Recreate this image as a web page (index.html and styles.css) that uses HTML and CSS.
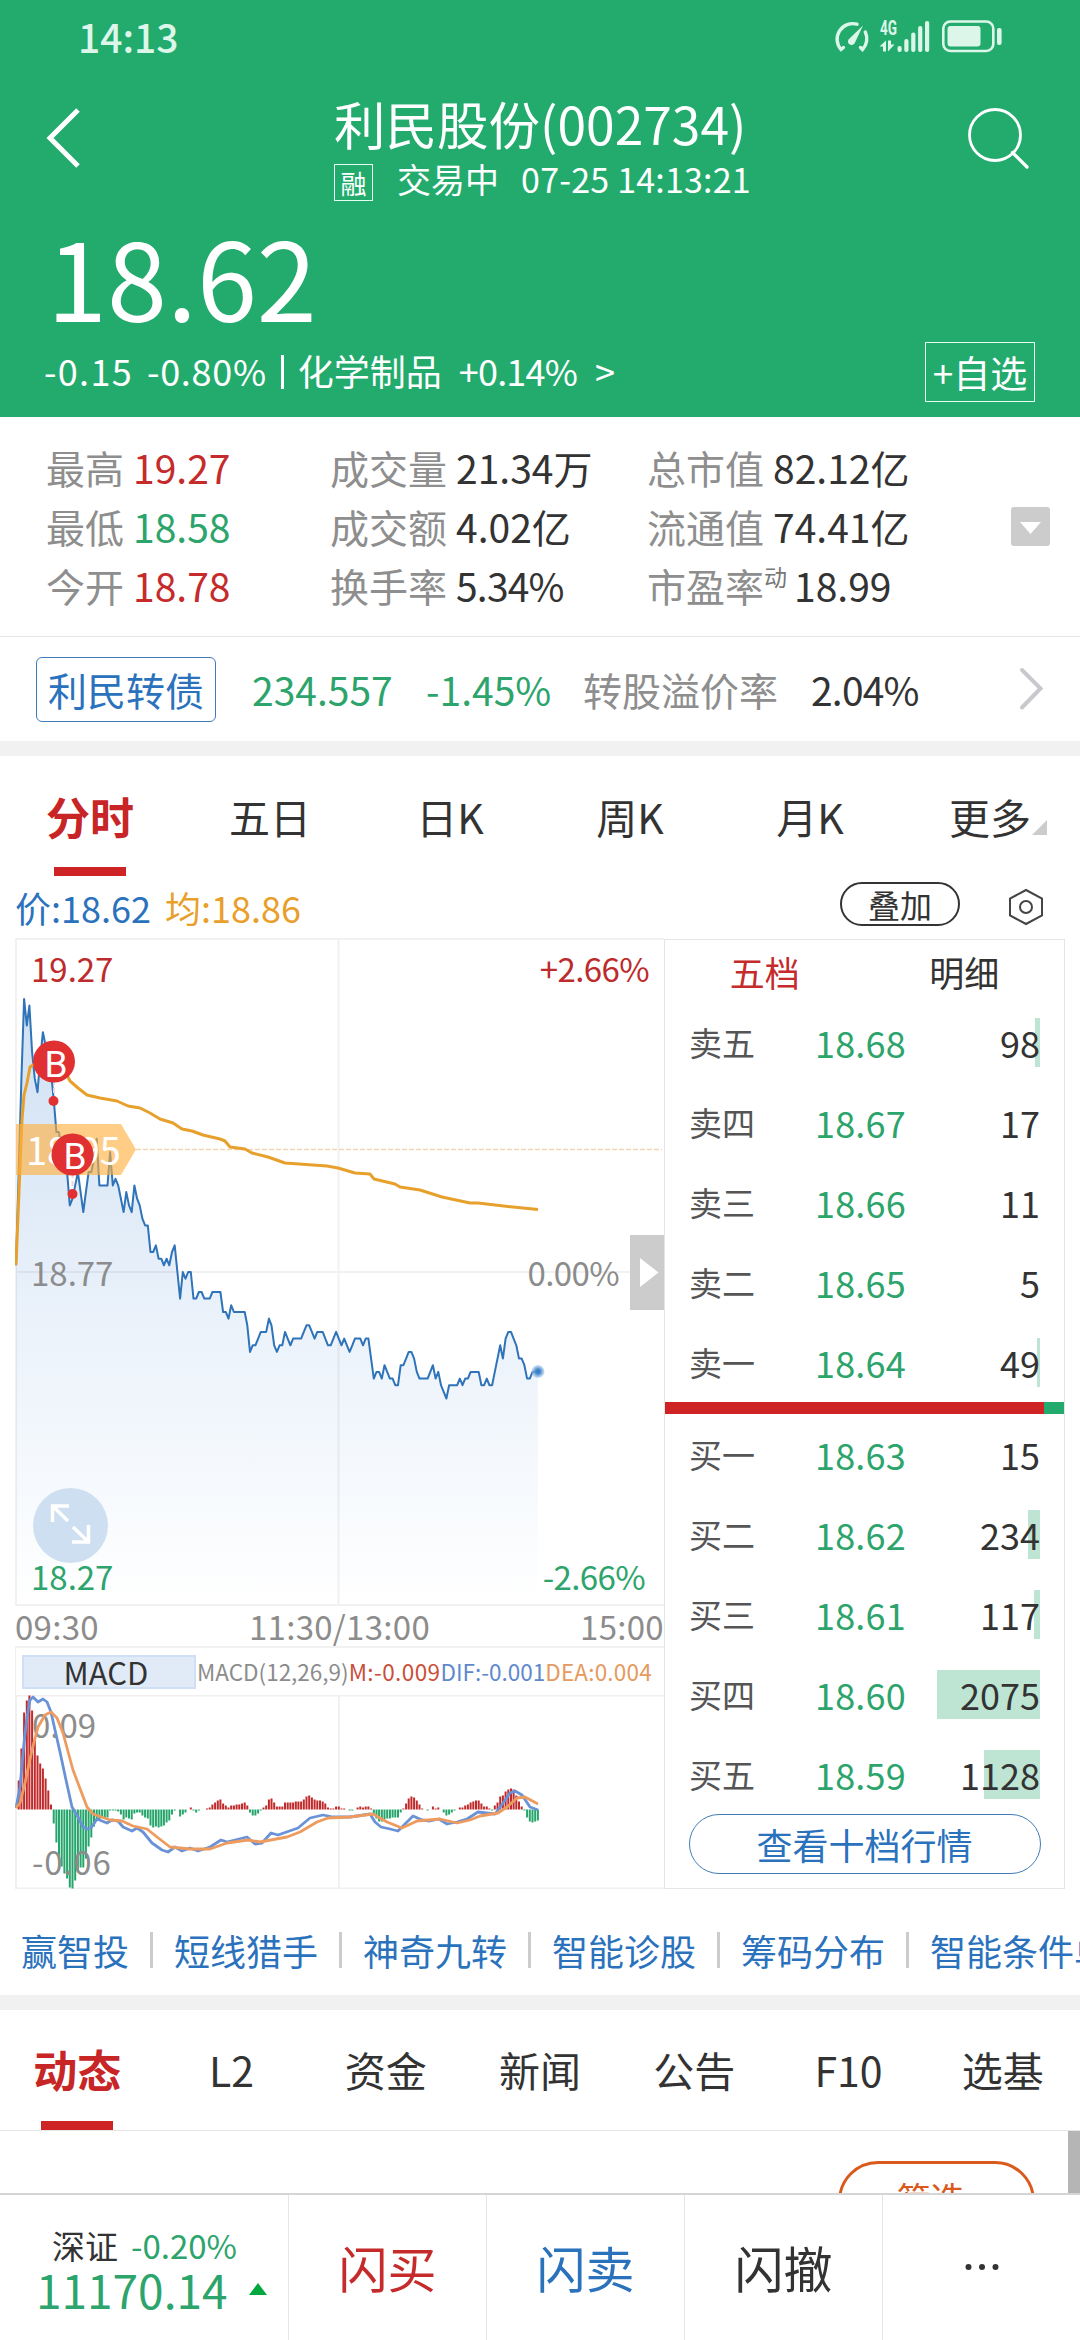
FILE: index.html
```html
<!DOCTYPE html>
<html lang="zh-CN">
<head>
  <meta charset="UTF-8" />
  <meta name="viewport" content="width=device-width, initial-scale=1.0"/>
  <title>利民股份(002734)</title>
  <link rel="stylesheet" href="styles.css">
</head>
<body>

  <header class="header">
    <div class="status-bar">
      <span class="clock">14:13</span>
      <svg class="status-icons" width="172" height="40" viewBox="832 18 172 40">
        <g fill="none" stroke="#dcf7e9" stroke-width="3.4" stroke-linecap="round">
          <path d="M857 24.2A15.6 15.6 0 0 0 841 49.500L843.500 47.500"/>
          <path d="M865.300 32A15.600 15.600 0 0 1 862.500 49.500L860.500 47.500"/>
          <rect x="943.300" y="21.500" width="50" height="29.500" rx="7" stroke-width="2.600"/>
        </g>
        <path d="M863 25.500L855 42.500A3.600 3.600 0 1 1 849.500 38.500Z" fill="#dcf7e9"/>
        <text x="880" y="34.500" class="net-text" textLength="17" lengthAdjust="spacingAndGlyphs">4G</text>
        <g fill="#dcf7e9">
          <path d="M879.500 46.500L886 40.500V51.500H883V46.500Z"/>
          <path d="M888 40.500H891V44.500H894.500L888 51.500Z"/>
          <rect x="897.500" y="46" width="4.200" height="6" rx="2"/>
          <rect x="904.300" y="39" width="4.200" height="13" rx="2"/>
          <rect x="911.200" y="32.500" width="4.200" height="19.500" rx="2"/>
          <rect x="918.100" y="26" width="4.200" height="26" rx="2"/>
          <rect x="925" y="21" width="4.200" height="31" rx="2"/>
          <rect x="947.500" y="26" width="33" height="20.500" rx="3"/>
          <rect x="997" y="28" width="4.600" height="17" rx="2"/>
        </g>
      </svg>
    </div>

    <div class="title-bar">
      <svg class="back" width="40" height="62" viewBox="0 0 40 62">
        <path d="M34 4L6 32L34 60" fill="none" stroke="#fff" stroke-width="5"/>
      </svg>
      <div class="title-box">
        <h1>利民股份(002734)</h1>
        <div class="sub-title">
          <span class="margin-tag">融</span>
          <span>交易中</span>
          <span class="trade-time">07-25 14:13:21</span>
        </div>
      </div>
      <svg class="search" width="64" height="64" viewBox="0 0 64 64">
        <circle cx="28" cy="28" r="25.500" fill="none" stroke="#fff" stroke-width="2.800"/>
        <path d="M45.500 45.500L60 60" stroke="#fff" stroke-width="3.200" stroke-linecap="round"/>
      </svg>
    </div>

    <div class="price">18.62</div>
    <div class="change-row">
      <span class="change">-0.15</span>
      <span class="change-pct">-0.80%</span>
      <span class="bar"></span>
      <span class="sector">化学制品</span>
      <span class="sector-pct">+0.14%</span>
      <span>&gt;</span>
      <button class="add-btn">+自选</button>
    </div>
  </header>

  <section class="stats">
    <div class="stats-col col-1">
      <p><span>最高</span><b class="red">19.27</b></p>
      <p><span>最低</span><b class="green">18.58</b></p>
      <p><span>今开</span><b class="red">18.78</b></p>
    </div>
    <div class="stats-col col-2">
      <p><span>成交量</span><b>21.34万</b></p>
      <p><span>成交额</span><b>4.02亿</b></p>
      <p><span>换手率</span><b class="pct">5.34%</b></p>
    </div>
    <div class="stats-col col-3">
      <p><span>总市值</span><b>82.12亿</b></p>
      <p><span>流通值</span><b>74.41亿</b></p>
      <p><span>市盈率</span><i>动</i><b>18.99</b></p>
    </div>
    <svg class="drop" width="39" height="39" viewBox="0 0 39 39">
      <rect width="39" height="39" rx="3" fill="#ccc"/>
      <path d="M9 15H30L19.500 27Z" fill="#fff"/>
    </svg>
  </section>

  <section class="bond">
    <span class="bond-name">利民转债</span>
    <span class="bond-price green">234.557</span>
    <span class="bond-pct green">-1.45%</span>
    <span class="bond-label">转股溢价率</span>
    <span class="pct">2.04%</span>
    <svg class="bond-arrow" width="26" height="44" viewBox="0 0 26 44">
      <path d="M3 3L21.500 21.500L3 40.500" fill="none" stroke="#c8c8cd" stroke-width="4" stroke-linecap="round"/>
    </svg>
  </section>

  <nav class="tabs chart-tabs">
    <a class="active">分时</a>
    <a>五日</a>
    <a>日K</a>
    <a>周K</a>
    <a>月K</a>
    <a>更多<span class="corner"></span></a>
  </nav>

  <div class="legend">
    <span class="blue">价:18.62</span>
    <span class="orange">均:18.86</span>
    <button class="overlay-btn">叠加</button>
    <svg class="setting" width="36" height="38" viewBox="0 0 36 38">
      <path d="M18 2L34 10.500V27.500L18 36L2 27.500V10.500Z" fill="none" stroke="#444" stroke-width="2"/>
      <circle cx="18" cy="19" r="6" fill="none" stroke="#444" stroke-width="2"/>
    </svg>
  </div>

  <section class="market">
    <div class="charts">
      <svg class="price-chart" width="649" height="668" viewBox="15 938 649 668">
        <defs>
          <linearGradient id="fillBlue" gradientUnits="userSpaceOnUse" x1="0" y1="1000" x2="0" y2="1605">
            <stop offset="0" stop-color="#cfe0f3"/>
            <stop offset="0.5" stop-color="#e9f1fa"/>
            <stop offset="1" stop-color="#ffffff"/>
          </linearGradient>
          <radialGradient id="lastDot">
            <stop offset="0" stop-color="#2f74c0"/>
            <stop offset="0.4" stop-color="#4d8ccf"/>
            <stop offset="1" stop-color="#9cc3ea" stop-opacity="0.5"/>
          </radialGradient>
        </defs>
        <path id="priceArea" fill="url(#fillBlue)"/>
        <g stroke="#000" stroke-opacity="0.055" stroke-width="2" fill="none">
          <path d="M15 939H664M15 1272H664M15 1605H664M338.500 939V1605M16 939V1606"/>
        </g>
        <path d="M136 1149.500H662" stroke="#efd6b4" stroke-width="1.500" stroke-dasharray="5 2"/>
        <polyline id="priceLine" fill="none" stroke="#2f73b8" stroke-width="2" stroke-linejoin="round"/>
        <polyline fill="none" stroke="#e8a02c" stroke-width="3" stroke-linejoin="round" points="16,1265 20,1167 22,1120 24,1095 27,1083 30,1067 33,1065 40,1063 50,1066 60,1070 67,1075 70,1081 78,1088 87,1095 100,1098 117,1101 128,1106 140,1108 150,1113 160,1119 173,1123 182,1129 192,1131 203,1135 220,1139 225,1141 230,1147 245,1149 252,1153 268,1157 285,1163 327,1166 338,1168 355,1173 370,1174 374,1179 395,1184 400,1187 420,1190 442,1197 470,1203 478,1203 513,1207 538,1209.600"/>
        <circle cx="538" cy="1371.500" r="6.500" fill="url(#lastDot)"/>

        <path d="M16 1124H121L136 1149.500L121 1175H16Z" fill="#ffae3c" fill-opacity="0.62"/>
        <text x="26" y="1165" class="tag-text">18.95</text>
        <path d="M54 1080V1097M72.500 1173V1190" stroke="#e9d5dd" stroke-width="2" stroke-dasharray="5 3"/>
        <g fill="#e03031">
          <circle cx="54" cy="1061.500" r="21"/>
          <circle cx="53.500" cy="1101" r="5"/>
          <circle cx="72.500" cy="1154.500" r="21"/>
          <circle cx="72.500" cy="1194" r="5"/>
        </g>
        <text x="56" y="1076.500" class="mark-text">B</text>
        <text x="75" y="1169" class="mark-text">B</text>

        <g class="axis-text">
          <text x="31" y="982" class="fill-red">19.27</text>
          <text x="649" y="982" class="fill-red end">+2.66%</text>
          <text x="31" y="1286">18.77</text>
          <text x="619" y="1286" class="end">0.00%</text>
        </g>
        <circle cx="70.500" cy="1525.500" r="37.500" fill="#cddff1"/>
        <path d="M69 1506H52.500V1522M53 1506.500L68 1521M72 1542H88.500V1525M73 1527L88 1541.500" fill="none" stroke="#fff" stroke-width="3.500"/>
        <g class="axis-text">
          <text x="31" y="1590" class="fill-green">18.27</text>
          <text x="645" y="1590" class="fill-green end">-2.66%</text>
        </g>
        <rect x="630" y="1235" width="34" height="75" fill="#ccc"/>
        <path d="M640 1258L658.500 1272.500L640 1287Z" fill="#fff"/>
      </svg>

      <div class="time-axis">
        <span>09:30</span>
        <span>11:30/13:00</span>
        <span>15:00</span>
      </div>

      <div class="macd-head">
        <span class="macd-btn">MACD</span>
        <span class="macd-param">MACD(12,26,9)</span>
        <span class="macd-m">M:-0.009</span>
        <span class="macd-dif">DIF:-0.001</span>
        <span class="macd-dea">DEA:0.004</span>
      </div>

      <svg class="macd-chart" width="649" height="194" viewBox="15 1695 649 194">
        <path d="M15 1695.500H664M15 1888.500H664M339 1695V1889M16 1695V1889" stroke="#f0f0f0" stroke-width="2"/>
        <g id="macdBars"></g>
        <g class="axis-text">
          <text x="32" y="1738">0.09</text>
          <text x="32" y="1875" class="low">-0.06</text>
        </g>
        <g fill="none" stroke-width="2.800" stroke-linejoin="round">
          <polyline stroke="#6a92d6" points="16,1808 20,1787 24,1743 27,1717 30,1700 33,1697 38,1702 43,1699 47,1702 51,1712 55,1730 60,1752 66,1780 72,1807 78,1817 83,1827 87,1829 91,1828 97,1819 107,1823 112,1820 118,1821 123,1827 132,1831 137,1828 143,1832 152,1843 162,1850 168,1852 175,1847 182,1851 190,1848 198,1851 210,1847 221,1840 227,1842 247,1837 255,1844 262,1843 271,1833 278,1835 298,1828 310,1818 323,1815 333,1817 350,1817 370,1814 375,1822 381,1827 390,1829 398,1831 407,1822 413,1816 422,1820 430,1821 439,1819 447,1824 457,1822 467,1819 478,1812 495,1814 503,1803 510,1793 515,1791 522,1795 530,1807 538,1810"/>
          <polyline stroke="#ee9b5f" points="16,1808 20,1803 25,1783 32,1750 38,1727 45,1715 51,1712 57,1718 63,1733 73,1770 87,1807 93,1814 110,1820 122,1821 133,1826 147,1829 157,1837 170,1847 190,1849 210,1849 227,1843 248,1840 260,1842 287,1837 300,1832 317,1822 328,1818 350,1817 373,1814 387,1822 402,1828 417,1821 440,1819 457,1823 470,1820 480,1816 498,1813 507,1807 517,1798 525,1797 538,1804"/>
        </g>
      </svg>
    </div>

    <div class="book">
      <div class="book-tabs">
        <span class="red">五档</span>
        <span>明细</span>
      </div>
      <div class="book-row"><span>卖五</span><b>18.68</b><em><i style="width:5px"></i>98</em></div>
      <div class="book-row"><span>卖四</span><b>18.67</b><em>17</em></div>
      <div class="book-row"><span>卖三</span><b>18.66</b><em>11</em></div>
      <div class="book-row"><span>卖二</span><b>18.65</b><em>5</em></div>
      <div class="book-row"><span>卖一</span><b>18.64</b><em><i style="width:3px"></i>49</em></div>
      <div class="ratio"><span></span></div>
      <div class="book-row"><span>买一</span><b>18.63</b><em>15</em></div>
      <div class="book-row"><span>买二</span><b>18.62</b><em><i style="width:12px"></i>234</em></div>
      <div class="book-row"><span>买三</span><b>18.61</b><em><i style="width:6px"></i>117</em></div>
      <div class="book-row"><span>买四</span><b>18.60</b><em><i style="width:103px"></i>2075</em></div>
      <div class="book-row"><span>买五</span><b>18.59</b><em><i style="width:56px"></i>1128</em></div>
      <button class="more-btn">查看十档行情</button>
    </div>
  </section>

  <div class="links">
    <a>赢智投</a>
    <a>短线猎手</a>
    <a>神奇九转</a>
    <a>智能诊股</a>
    <a>筹码分布</a>
    <a>智能条件单</a>
  </div>

  <nav class="tabs info-tabs">
    <a class="active">动态</a>
    <a>L2</a>
    <a>资金</a>
    <a>新闻</a>
    <a>公告</a>
    <a>F10</a>
    <a>选基</a>
  </nav>

  <section class="feed">
    <button class="filter-btn">筛选</button>
    <div class="scrollbar"></div>
  </section>

  <footer class="footer">
    <div class="index">
      <p class="index-top">深证<span>-0.20%</span></p>
      <p class="index-num">11170.14<span class="up"></span></p>
    </div>
    <a class="red">闪买</a>
    <a class="blue">闪卖</a>
    <a>闪撤</a>
    <a>
      <svg width="36" height="8" viewBox="0 0 36 8" fill="#333">
        <circle cx="4.500" cy="4" r="3"/><circle cx="18" cy="4" r="3"/><circle cx="31.500" cy="4" r="3"/>
      </svg>
    </a>
  </footer>

<script>
    const STEP = 2.69;
    const LEFT = 16;

    // 每分钟价格，相对昨收 18.77 的差值（分）
    const ticks = [
      1, 15, 29, 41, 37, 40, 33, 29, 27, 32, 36, 34, 31, 30, 26, 21, 21, 18, 16, 15,
      10, 11, 13, 15, 12, 9, 12, 15, 15, 17, 20, 13, 13, 13, 13, 18, 13, 14, 13, 11,
      9, 12, 10, 9, 13, 11, 10, 8, 7, 7, 3, 3, 4, 2, 2, 1, 2, 1, 3, 4,
      0, -4, 0, -1, 0, 0, -4, -4, -3, -3, -4, -4, -4, -3, -3, -3, -3, -6, -6, -7,
      -5, -6, -6, -6, -6, -6, -8, -12, -11, -11, -10, -9, -9, -9, -7, -8, -11, -12, -11, -11,
      -9, -10, -11, -10, -10, -10, -10, -9, -8, -8, -9, -10, -9, -9, -9, -10, -11, -11, -10, -9,
      -10, -11, -10, -11, -12, -11, -10, -10, -10, -11, -10, -10, -13, -16, -15, -15, -16, -14, -15, -16,
      -16, -17, -17, -14, -14, -13, -12, -12, -13, -15, -16, -16, -16, -16, -15, -14, -16, -15, -17, -18,
      -19, -17, -17, -17, -17, -16, -17, -16, -16, -15, -15, -15, -15, -17, -17, -16, -17, -17, -15, -13,
      -11, -13, -10, -9, -9, -10, -11, -13, -13, -14, -16, -16, -15, -15, -15
    ];

    // MACD 柱高
    const bars = [
      0, 29, 61, 97, 109, 114, 99, 71, 54, 46, 41, 31, 19, 5, -14, -33, -49, -57, -64, -69,
      -78, -79, -71, -62, -58, -58, -49, -37, -28, -17, -11, -10, -8, -9, -8, -1, -1, -1, -2, -5,
      -10, -8, -9, -10, -4, -3, -3, -6, -8, -9, -16, -18, -17, -18, -17, -16, -13, -11, -5, -1,
      0, -7, -5, -3, 0, 2, -1, -3, -1, 0, 0, 1, 2, 5, 7, 9, 10, 6, 4, 2,
      4, 4, 5, 5, 6, 7, 4, -3, -6, -6, -4, -1, 2, 4, 10, 11, 7, 3, 3, 3,
      7, 7, 7, 7, 8, 8, 8, 10, 13, 14, 12, 10, 9, 9, 8, 6, 2, 1, 1, 3,
      3, 1, 1, 0, -1, -1, 0, 2, 3, 2, 3, 3, 1, -5, -9, -12, -12, -10, -9, -9,
      -8, -8, -8, -3, 1, 6, 11, 13, 12, 9, 5, 1, 0, -1, 0, 3, 1, 2, 0, -3,
      -6, -5, -3, -1, 0, 2, 2, 4, 5, 7, 8, 9, 9, 6, 3, 3, 1, -1, 4, 7,
      13, 14, 18, 20, 21, 20, 14, 8, 3, -1, -8, -12, -13, -12, -11
    ];

    const points = ticks.map((t, i) => (LEFT + i * STEP).toFixed(1) + "," + (1272 - t * 6.66).toFixed(1));
    const lastX = (LEFT + (ticks.length - 1) * STEP).toFixed(1);
    document.getElementById("priceLine").setAttribute("points", points.join(" "));
    document.getElementById("priceArea").setAttribute("d", "M" + points.join("L") + "L" + lastX + ",1605L" + LEFT + ",1605Z");

    const macdBars = document.getElementById("macdBars");
    bars.forEach((h, i) => {
      if (!h) return;
      const rect = document.createElementNS("http://www.w3.org/2000/svg", "rect");
      rect.setAttribute("x", (LEFT + i * STEP - 1).toFixed(1));
      rect.setAttribute("y", h > 0 ? 1809.5 - h : 1809.5);
      rect.setAttribute("width", 2);
      rect.setAttribute("height", Math.abs(h));
      rect.setAttribute("fill", h > 0 ? "#c12a2b" : "#25a56b");
      macdBars.appendChild(rect);
    });
  </script>

</body>
</html>
```
FILE: styles.css
```css
* {
  box-sizing: border-box;
}

body {
  margin: 0;
  width: 1080px;
  height: 2340px;
  overflow: hidden;
  background-color: #fff;
  color: #333;
  font-family: 'Noto Sans CJK SC', sans-serif;
  font-size: 36px;
  line-height: 1;
  white-space: nowrap;
}

h1,
p {
  margin: 0;
  font-weight: normal;
}

b,
i,
em {
  font-weight: normal;
  font-style: normal;
}

button {
  padding: 0;
  background: none;
  font-family: inherit;
  color: inherit;
}

svg {
  display: block;
  flex-shrink: 0;
}

.red {
  color: #c52b2b;
}

.green {
  color: #2ca46c;
}

.blue {
  color: #2b72bd;
}

.orange {
  color: #e99f2b;
}

.pct {
  letter-spacing: -0.8px;
}

/* header */
.header {
  height: 417px;
  background-color: #23ab6e;
  color: #fff;
}

.status-bar {
  height: 70px;
  padding: 0 76px 0 78px;
  display: flex;
  justify-content: space-between;
}

.clock {
  height: 70px;
  line-height: 72px;
  font-size: 39px;
  font-weight: 500;
  color: #dcf7e9;
}

.status-icons {
  margin-top: 18px;
}

.net-text {
  font-family: 'Roboto', sans-serif;
  font-size: 20px;
  font-weight: 700;
  fill: #dcf7e9;
}

.title-bar {
  height: 148px;
  padding: 0 49px 0 44px;
  display: flex;
  justify-content: space-between;
}

.back {
  margin-top: 36px;
}

.search {
  margin-top: 37px;
}

.title-box {
  padding-top: 23px;
  margin-left: 34px;
}

.title-box h1 {
  font-size: 51.5px;
  line-height: 60px;
}

.sub-title {
  display: flex;
  align-items: center;
  height: 50px;
  margin-top: 1px;
  font-size: 34px;
  line-height: 50px;
}

.margin-tag {
  width: 39px;
  height: 37px;
  margin: 6px 24px 0 0;
  border: 1px solid #e6fff4;
  font-size: 26px;
  line-height: 35px;
  text-align: center;
}

.trade-time {
  margin-left: 22px;
  letter-spacing: 0.2px;
}

.price {
  height: 114px;
  padding-left: 47px;
  font-size: 108px;
  line-height: 114px;
}

.change-row {
  display: flex;
  align-items: center;
  height: 60px;
  margin-top: 10px;
  padding: 0 45px 0 44px;
  font-size: 36px;
  line-height: 56px;
}

.change-row span {
  margin-top: -4px;
}

.change {
  margin-right: 14px;
  letter-spacing: 1.3px;
}

.change-pct {
  letter-spacing: 0.7px;
}

.change-row .bar {
  width: 3px;
  height: 34px;
  margin: 0 14px 0 14px;
  background-color: #fff;
}

.sector {
  margin-right: 17px;
}

.sector-pct {
  margin-right: 18px;
  letter-spacing: -0.8px;
}

.add-btn {
  width: 110px;
  height: 60px;
  margin-left: auto;
  border: 1px solid #e6fff4;
  font-size: 37px;
  line-height: 56px;
}

/* stats */
.stats {
  display: flex;
  height: 220px;
  padding: 21px 30px 0 46px;
  border-bottom: 1px solid #e5e5e5;
  font-size: 39px;
}

.stats-col p {
  display: flex;
  height: 59px;
  line-height: 59px;
}

.stats-col span {
  margin-right: 9px;
  color: #8e8e8e;
}

.col-1 {
  width: 284px;
}

.col-2 {
  width: 317px;
}

.stats-col i {
  width: 23px;
  margin: -9px 7px 0 -9px;
  font-size: 23px;
  color: #777;
}

.drop {
  margin: 69px 0 0 auto;
}

/* convertible bond */
.bond {
  display: flex;
  align-items: center;
  height: 119px;
  padding: 0 35px 0 36px;
  border-bottom: 15px solid #f1f1f1;
  font-size: 39px;
}

.bond-name {
  width: 180px;
  height: 65px;
  margin-right: 36px;
  border: 1px solid #3f7cb8;
  border-radius: 6px;
  color: #2b72bd;
  line-height: 62px;
  text-align: center;
}

.bond-price {
  width: 174px;
}

.bond-pct {
  width: 157px;
}

.bond-label {
  width: 228px;
  color: #8e8e8e;
}

.bond-arrow {
  margin-left: auto;
}

/* tabs */
.tabs {
  display: flex;
  font-size: 41px;
}

.tabs a {
  position: relative;
  flex: 1;
  display: flex;
  flex-direction: column;
  align-items: center;
}

.tabs .active {
  color: #c72526;
  font-size: 44px;
  font-weight: 700;
}

.tabs .active::after {
  content: "";
  width: 72px;
  height: 9px;
  margin-top: auto;
  background-color: #cf2425;
}

.chart-tabs {
  height: 120px;
  line-height: 120px;
}

.chart-tabs a {
  line-height: 120px;
}

.chart-tabs .active::after {
  margin-top: -9px;
}

.corner {
  position: absolute;
  right: 33px;
  bottom: 41px;
  border-left: 15px solid transparent;
  border-bottom: 15px solid #ccc;
}

/* price legend */
.legend {
  display: flex;
  align-items: center;
  height: 62px;
  padding: 0 36px 0 15px;
  line-height: 62px;
}

.legend .orange {
  margin-left: 14px;
}

.overlay-btn {
  width: 120px;
  height: 44px;
  margin: -6px 48px 0 auto;
  border: 2px solid #333;
  border-radius: 22px;
  font-size: 32px;
  line-height: 39px;
}

/* charts */
.market {
  display: flex;
  height: 951px;
  padding-left: 15px;
}

.charts {
  width: 649px;
}

.axis-text {
  font-size: 33px;
  fill: #8c8c8c;
}

.end {
  text-anchor: end;
  letter-spacing: -0.6px;
}

.low {
  letter-spacing: 0.8px;
}

.fill-red {
  fill: #bd2b2c;
}

.fill-green {
  fill: #2ca46c;
}

.tag-text {
  font-size: 38px;
  fill: #fff;
}

.mark-text {
  font-family: 'Roboto', sans-serif;
  font-size: 37px;
  fill: #fff;
  text-anchor: middle;
}

.time-axis {
  display: flex;
  justify-content: space-between;
  height: 40px;
  color: #8c8c8c;
  font-size: 33px;
  letter-spacing: 0.3px;
  line-height: 40px;
}

.macd-head {
  display: flex;
  align-items: center;
  height: 49px;
  padding-left: 6px;
  border-top: 2px solid #f1f1f1;
  border-left: 1px solid #f0f0f0;
  font-size: 22.5px;
}

.macd-btn {
  width: 174px;
  height: 34px;
  padding-right: 6px;
  margin: 0 1px 0 0;
  background-color: #e1ebf7;
  border: 2px solid #cfdff5;
  font-size: 31px;
  line-height: 29px;
  text-align: center;
}

.macd-param {
  color: #8c8c8c;
}

.macd-m {
  color: #c94f3a;
  letter-spacing: 0.4px;
}

.macd-dif {
  color: #6088cd;
}

.macd-dea {
  color: #e59a5f;
  letter-spacing: 0.2px;
}

/* order book */
.book {
  width: 401px;
  margin-top: 1px;
  border: 1px solid #e5e5e5;
}

.book-tabs {
  display: flex;
  height: 62px;
  line-height: 63px;
  font-size: 35px;
}

.book-tabs span {
  flex: 1;
  text-align: center;
}

.book-row {
  display: flex;
  align-items: center;
  height: 80px;
  padding: 0 24px 0 24px;
}

.book-row span {
  width: 126px;
  color: #555;
  font-size: 33px;
}

.book-row b {
  color: #2ca46c;
  letter-spacing: 0.2px;
}

.book-row em {
  position: relative;
  flex: 1;
  height: 49px;
  line-height: 49px;
  text-align: right;
}

/* depth bar behind the volume */
.book-row i {
  position: absolute;
  right: 0;
  top: 0;
  height: 49px;
  background-color: #bee5d4;
  z-index: -1;
}

.ratio {
  height: 12px;
  background-color: #23ab6e;
}

.ratio span {
  display: block;
  width: 95%;
  height: 12px;
  background-color: #cf2425;
}

.more-btn {
  display: block;
  width: 352px;
  height: 60px;
  margin: 0 auto;
  border: 1px solid #3f7cb8;
  border-radius: 30px;
  color: #2b72bd;
  font-size: 36px;
  line-height: 55px;
}

/* links */
.links {
  display: flex;
  align-items: center;
  height: 121px;
  padding: 15px 0 0 21px;
  border-bottom: 15px solid #f1f1f1;
  color: #2b72bd;
}

.links a {
  display: flex;
  align-items: center;
}

.links a + a::before {
  content: "";
  width: 3px;
  height: 36px;
  margin: 0 21px;
  background-color: #ccc;
}

.info-tabs {
  height: 121px;
  border-bottom: 1px solid #e6e6e6;
}

.info-tabs a {
  line-height: 118px;
}

.info-tabs .active::after {
  margin-top: -7px;
}

.feed {
  display: flex;
  justify-content: flex-end;
  height: 62px;
  overflow: hidden;
}

.filter-btn {
  width: 197px;
  height: 80px;
  margin: 30px 33px 0 0;
  padding: 0 12px 6px 0;
  border: 3px solid #da5a1e;
  border-radius: 40px;
  color: #da5a1e;
  font-size: 34px;
  line-height: 68px;
}

.scrollbar {
  width: 12px;
  background-color: #b5b5b5;
}

/* footer */
.footer {
  display: flex;
  height: 147px;
  border-top: 2px solid #d5d5d5;
}

.footer a {
  flex: 1;
  display: flex;
  align-items: center;
  justify-content: center;
  padding-bottom: 2px;
  border-left: 1px solid #e6e6e6;
  font-size: 49px;
}

.index {
  width: 288px;
}

.index-top {
  padding: 28px 0 0 52px;
  font-size: 33px;
  line-height: 44px;
}

.index-top span {
  margin-left: 13px;
  color: #2ca46c;
}

.index-num {
  display: flex;
  align-items: center;
  padding-left: 36px;
  color: #2ca46c;
  font-size: 46px;
  line-height: 44px;
}

.up {
  margin-left: 21px;
  border-left: 9px solid transparent;
  border-right: 9px solid transparent;
  border-bottom: 12px solid #00a83f;
}
```
